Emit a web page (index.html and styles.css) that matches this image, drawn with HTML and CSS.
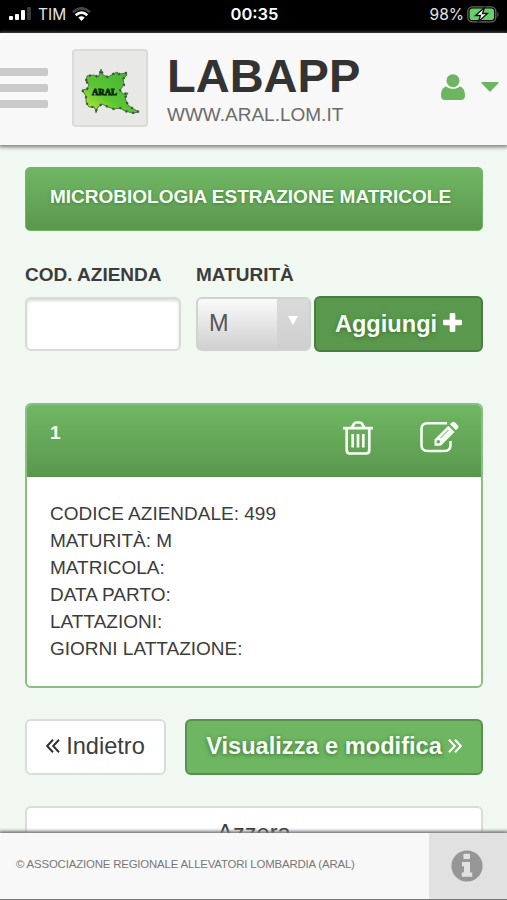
FILE: index.html
```
<!DOCTYPE html>
<html lang="it">
<head>
  <meta charset="utf-8">
  <title>LABAPP</title>
  <link rel="stylesheet" href="styles.css">
</head>
<body>
  <div class="status">
    <div class="status-left">
      <svg width="23" height="14" viewBox="0 0 23 14" fill="#fff">
        <rect x="0" y="9" width="4" height="4" rx="1"/>
        <rect x="6" y="7" width="4" height="6" rx="1"/>
        <rect x="12" y="3" width="4" height="10" rx="1"/>
        <rect x="18" y="0" width="4" height="13" rx="1" fill="#3a3a3a"/>
      </svg>
      <span class="carrier">TIM</span>
      <svg width="19" height="14" viewBox="0 0 19 14" fill="none" stroke-width="2.600">
        <path d="M1 5.200Q9.500-2.600 18 5.200" stroke="#454545"/>
        <path d="M3.700 8.200Q9.500 3 15.300 8.200" stroke="#fff"/>
        <path d="M6.300 10.600Q9.500 8 12.700 10.600L9.500 14z" fill="#fff" stroke="none"/>
      </svg>
    </div>
    <span class="clock">00:35</span>
    <div class="status-right">
      <span>98%</span>
      <svg width="33" height="17" viewBox="0 0 33 17">
        <rect x=".8" y=".8" width="28" height="15" rx="4.500" fill="none" stroke="#666" stroke-width="1.300"/>
        <rect x="2.600" y="2.600" width="24.400" height="11.400" rx="2.800" fill="#65d068"/>
        <path d="M30.500 5.500q2 3 0 6z" fill="#666"/>
        <path d="M17.500 1.500L8.500 9.500h5l-2 6 9-8h-5z" fill="#fff" stroke="#111" stroke-width="1.300"/>
      </svg>
    </div>
  </div>

  <header>
    <div class="menu"><i></i><i></i><i></i></div>
    <div class="logo">
      <svg width="66" height="62" viewBox="0 0 66 62">
        <defs>
          <linearGradient id="region" x1="1" y1="0" x2="0" y2="1">
            <stop offset="0" stop-color="#3fae35"/>
            <stop offset=".6" stop-color="#5cc633"/>
            <stop offset="1" stop-color="#c4ec35"/>
          </linearGradient>
        </defs>
        <path d="M9 16L10 11L17 10L21 12L23 8L24 4L26 10L31 12L36 9L40 7L42 9L49 8L50 10L46 14L47 20L43 25L46 29L51 28L48 33L51 40L55 43L62 47L56 48L48 46L43 43L37 44L31 42L25 39L21 42L19 46L17 42L12 42L9 37L9 31L5 25L10 24L12 20z" fill="url(#region)" stroke="#4a7b43" stroke-width="1"/>
        <path d="M9 16L10 11L17 10L21 12L23 8L24 4L26 10L31 12L36 9L40 7L42 9L49 8L50 10L46 14L47 20L43 25L46 29L51 28L48 33L51 40L55 43L62 47L56 48L48 46L43 43L37 44L31 42L25 39L21 42L19 46L17 42L12 42L9 37L9 31L5 25L10 24L12 20z" fill="none" stroke="#3c523a" stroke-width="2.200" stroke-dasharray="2 5"/>
        <text x="15" y="30" textLength="25" lengthAdjust="spacingAndGlyphs" class="logo-text">ARAL</text>
      </svg>
    </div>
    <div class="brand">
      <h1>LABAPP</h1>
      <p>WWW.ARAL.LOM.IT</p>
    </div>
    <div class="user">
      <svg width="24" height="26" viewBox="0 0 24 26" fill="#6db561">
        <path d="M5 12.500C1.200 13.800 0 17.500 0 21.500C0 24.500 1.500 26 4.200 26H19.800C22.500 26 24 24.500 24 21.500C24 17.500 22.800 13.800 19 12.500C15 15.600 9 15.600 5 12.500z"/>
        <circle cx="12" cy="6.700" r="6.500"/>
      </svg>
      <svg width="18" height="10" viewBox="0 0 18 10" fill="#6db561"><path d="M1.500 0h15q2 0 .6 1.500L10 9q-1 1-2 0L.9 1.500Q-.5 0 1.500 0z"/></svg>
    </div>
  </header>

  <main>
    <h2 class="title">MICROBIOLOGIA ESTRAZIONE MATRICOLE</h2>

    <div class="form">
      <div class="field azienda">
        <label for="azienda">COD. AZIENDA</label>
        <input type="text" id="azienda">
      </div>
      <div class="field maturita">
        <label>MATURITÀ</label>
        <div class="select">
          <span>M</span>
          <div class="arrow"><svg width="10" height="9" viewBox="0 0 10 9" fill="#fff"><path d="M0 0h10L5 9z"/></svg></div>
        </div>
      </div>
      <button class="btn add">Aggiungi
        <svg width="19" height="19" viewBox="0 0 19 19" fill="#fff"><path d="M8 0h3q1.300 0 1.300 1.300v5.400h5.400Q19 6.700 19 8v3q0 1.300-1.300 1.300h-5.400v5.400Q12.300 19 11 19H8q-1.300 0-1.300-1.300v-5.400H1.300Q0 12.300 0 11V8q0-1.300 1.300-1.300h5.400V1.300Q6.700 0 8 0z"/></svg>
      </button>
    </div>

    <section class="card">
      <div class="card-head">
        <b>1</b>
        <svg class="trash" width="30" height="34" viewBox="0 0 30 34" fill="none" stroke="#f6fff4" stroke-width="2.700">
          <path d="M0 7.200h30M8.500 7L11 2.700Q11.800 1.500 13 1.500h4q1.200 0 2 1.200L21.500 7M3.700 7v22q0 3.500 3 3.500h16.600q3 0 3-3.500V7"/>
          <path d="M9.700 13v13.500M15 13v13.500M20.300 13v13.500"/>
        </svg>
        <svg class="edit" width="39" height="32" viewBox="0 0 39 32">
          <path d="M27 2.200H7.500Q1.500 2.200 1.500 8v16q0 6 6 6h17q6 0 6-6v-4" fill="none" stroke="#f6fff4" stroke-width="2.600"/>
          <path d="M14.500 18.500L28.300 4.700l6.300 6.300L20.800 24.800h-6.300z" fill="#f6fff4"/>
          <path d="M30 3.200l1.700-1.600q1.700-1.600 3.400 0l2.600 2.700q1.600 1.600 0 3.300L36 9.200z" fill="#f6fff4"/>
          <path d="M20.500 17l8-8" stroke="#68a95d" stroke-width="1"/>
          <circle cx="18.300" cy="20.800" r="1.800" fill="#68a95d"/>
        </svg>
      </div>
      <div class="card-body">
        <div>CODICE AZIENDALE: 499</div>
        <div>MATURITÀ: M</div>
        <div>MATRICOLA:</div>
        <div>DATA PARTO:</div>
        <div>LATTAZIONI:</div>
        <div>GIORNI LATTAZIONE:</div>
      </div>
    </section>

    <div class="actions">
      <button class="btn back">
        <svg width="14" height="14" viewBox="0 0 14 14" fill="none" stroke="#333" stroke-width="2"><path d="M7 .8L1.200 7L7 13.200M13 .8L7.200 7l5.800 6.200"/></svg>
        Indietro</button>
      <button class="btn view">Visualizza e modifica
        <svg width="14" height="14" viewBox="0 0 14 14" fill="none" stroke="#fff" stroke-width="2"><path d="M1 .8L6.800 7L1 13.200M7 .8L12.800 7L7 13.200"/></svg>
      </button>
    </div>
    <button class="btn reset">Azzera</button>
  </main>

  <footer>
    <p>© ASSOCIAZIONE REGIONALE ALLEVATORI LOMBARDIA (ARAL)</p>
    <div class="info">
      <svg width="32" height="32" viewBox="0 0 32 32">
        <circle cx="16" cy="16" r="15.600" fill="#969696"/>
        <path d="M13.200 3.800h5q.8 0 .8.800v3.600q0 .8-.8.800h-5q-.8 0-.8-.8V4.600q0-.8.800-.8zM11 12h8v10.500h2.200v4.300H10.800v-4.300H13v-6.200h-2z" fill="#e1e1e1"/>
      </svg>
    </div>
  </footer>
</body>
</html>
```
FILE: styles.css
```
* {
  box-sizing: border-box;
}

body {
  margin: 0;
  height: 900px;
  overflow: hidden;
  display: flex;
  flex-direction: column;
  font-family: "Liberation Sans", Arial, sans-serif;
  font-size: 19px;
  color: #3c3c3c;
  background-color: #f0f8f1;
}

svg {
  display: block;
  flex: none;
}

h1, h2, p {
  margin: 0;
}

.status {
  flex: none;
  height: 33px;
  padding: 0 7px 5px 9px;
  display: grid;
  grid-template-columns: 1fr auto 1fr;
  align-items: center;
  background-color: #000;
  color: #e4e4e4;
  font-family: Inter, "Liberation Sans", sans-serif;
  font-size: 16px;
}

.status-left, .status-right {
  display: flex;
  align-items: center;
}

.status-left {
  gap: 6px;
}

.carrier {
  font-size: 15.5px;
}

.status-right {
  justify-content: flex-end;
  gap: 3px;
  font-size: 15.5px;
}

.clock {
  font-weight: 600;
  font-size: 16.5px;
  color: #fff;
}

header {
  flex: none;
  height: 112px;
  display: flex;
  align-items: flex-start;
  background-color: #f8f8f8;
  box-shadow: 0 1px 4px 1px #777;
  position: relative;
}

.menu {
  width: 48px;
  margin: 35px 24px 0 0;
  display: flex;
  flex-direction: column;
  gap: 8px;
}

.menu i {
  height: 8px;
  background-color: #cacaca;
  border-radius: 0 2px 2px 0;
}

.logo {
  width: 76px;
  height: 78px;
  margin-top: 16px;
  padding: 14px 3px;
  background-color: #e8e8e6;
  border: 2px solid #dadad8;
  border-radius: 4px;
}

.logo-text {
  font-family: "Liberation Serif", serif;
  font-weight: bold;
  font-size: 7.5px;
  fill: #072b08;
  stroke: #072b08;
  stroke-width: .8px;
}

.brand {
  margin-left: 19px;
  padding-top: 16px;
}

h1 {
  font-size: 47px;
  line-height: 54px;
  color: #333;
}

.brand p {
  line-height: 24px;
  color: #6b6b6b;
}

.user {
  margin: 41px 8px 0 auto;
  display: flex;
  align-items: center;
  gap: 16px;
}

main {
  flex: 1;
  min-height: 0;
  overflow: hidden;
  padding: 22px 24px 0 25px;
}

.title {
  height: 64px;
  padding: 0 24px;
  line-height: 58px;
  font-size: 19px;
  color: #f5fff3;
  white-space: nowrap;
  text-shadow: 0 1px 3px #4b7e43;
  background: linear-gradient(#70b764, #5a984d);
  border: 1px solid #71b466;
  border-radius: 5px;
}

.form {
  margin-top: 32px;
  display: flex;
  align-items: flex-end;
}

.field label {
  display: block;
  height: 34px;
  line-height: 24px;
  font-weight: bold;
}

.azienda {
  width: 156px;
  margin-right: 15px;
}

.azienda input {
  display: block;
  width: 100%;
  height: 54px;
  background-color: #fff;
  border: 2px solid #d7dbd7;
  border-radius: 6px;
  box-shadow: inset 0 2px 3px #ddd;
}

.maturita {
  width: 115px;
  margin-right: 3px;
}

.select {
  height: 54px;
  display: flex;
  align-items: center;
  padding: 0 0 2px 11px;
  font-size: 23.5px;
  color: #555;
  background: linear-gradient(#fafafa, #d0d0d0);
  border: 2px solid #d0d2d0;
  border-radius: 6px;
}

.arrow {
  width: 32px;
  height: 50px;
  margin: 0 0 -2px auto;
  display: flex;
  justify-content: center;
  padding-top: 17px;
  background: linear-gradient(#dadada, #cfcfcf);
}

.btn {
  display: flex;
  align-items: center;
  justify-content: center;
  gap: 6px;
  height: 56px;
  padding: 0 0 2px;
  font-family: inherit;
  font-size: 23.6px;
  color: #3c3c3c;
  background-color: #fff;
  border: 2px solid #d9ddd9;
  border-radius: 6px;
  white-space: nowrap;
}

.add, .view {
  font-weight: bold;
  color: #f6fff4;
  text-shadow: 0 1px 4px #3c6b35;
}

.add {
  width: 169px;
  margin-bottom: -1px;
  padding-bottom: 0;
  background-color: #5a994d;
  border-color: #487d3f;
}

.add svg {
  margin-top: -3px;
}

.card {
  margin-top: 52px;
  height: 285px;
  background-color: #fff;
  border: 2px solid #8abf81;
  border-radius: 6px;
  overflow: hidden;
}

.card-head {
  height: 73px;
  margin: -1px -1px 0;
  padding: 17px 23px 0 24px;
  display: flex;
  align-items: flex-start;
  color: #f5fff3;
  background: linear-gradient(#70b764, #5a984d);
  border-bottom: 1px solid #529347;
}

.card-head b {
  line-height: 24px;
}

.trash {
  margin-left: auto;
}

.edit {
  margin-left: 47px;
}

.card-body {
  padding: 23px;
  line-height: 27px;
}

.actions {
  margin-top: 31px;
  display: flex;
  justify-content: space-between;
}

.back {
  width: 141px;
}

.view {
  width: 298px;
  background-color: #6eb661;
  border-color: #598f4f;
}

.reset {
  width: 100%;
  margin-top: 31px;
}

footer {
  flex: none;
  height: 67px;
  display: flex;
  align-items: stretch;
  background-color: #f8f8f8;
  border-bottom: 1px solid #777;
  box-shadow: 0 -1px 3px 1px #777;
  position: relative;
}

footer p {
  padding-left: 16px;
  line-height: 62px;
  font-size: 11.4px;
  letter-spacing: -.16px;
  color: #777;
}

.info {
  width: 78px;
  margin-left: auto;
  padding: 17px 0 0 22px;
  background-color: #e1e1e1;
}
```
